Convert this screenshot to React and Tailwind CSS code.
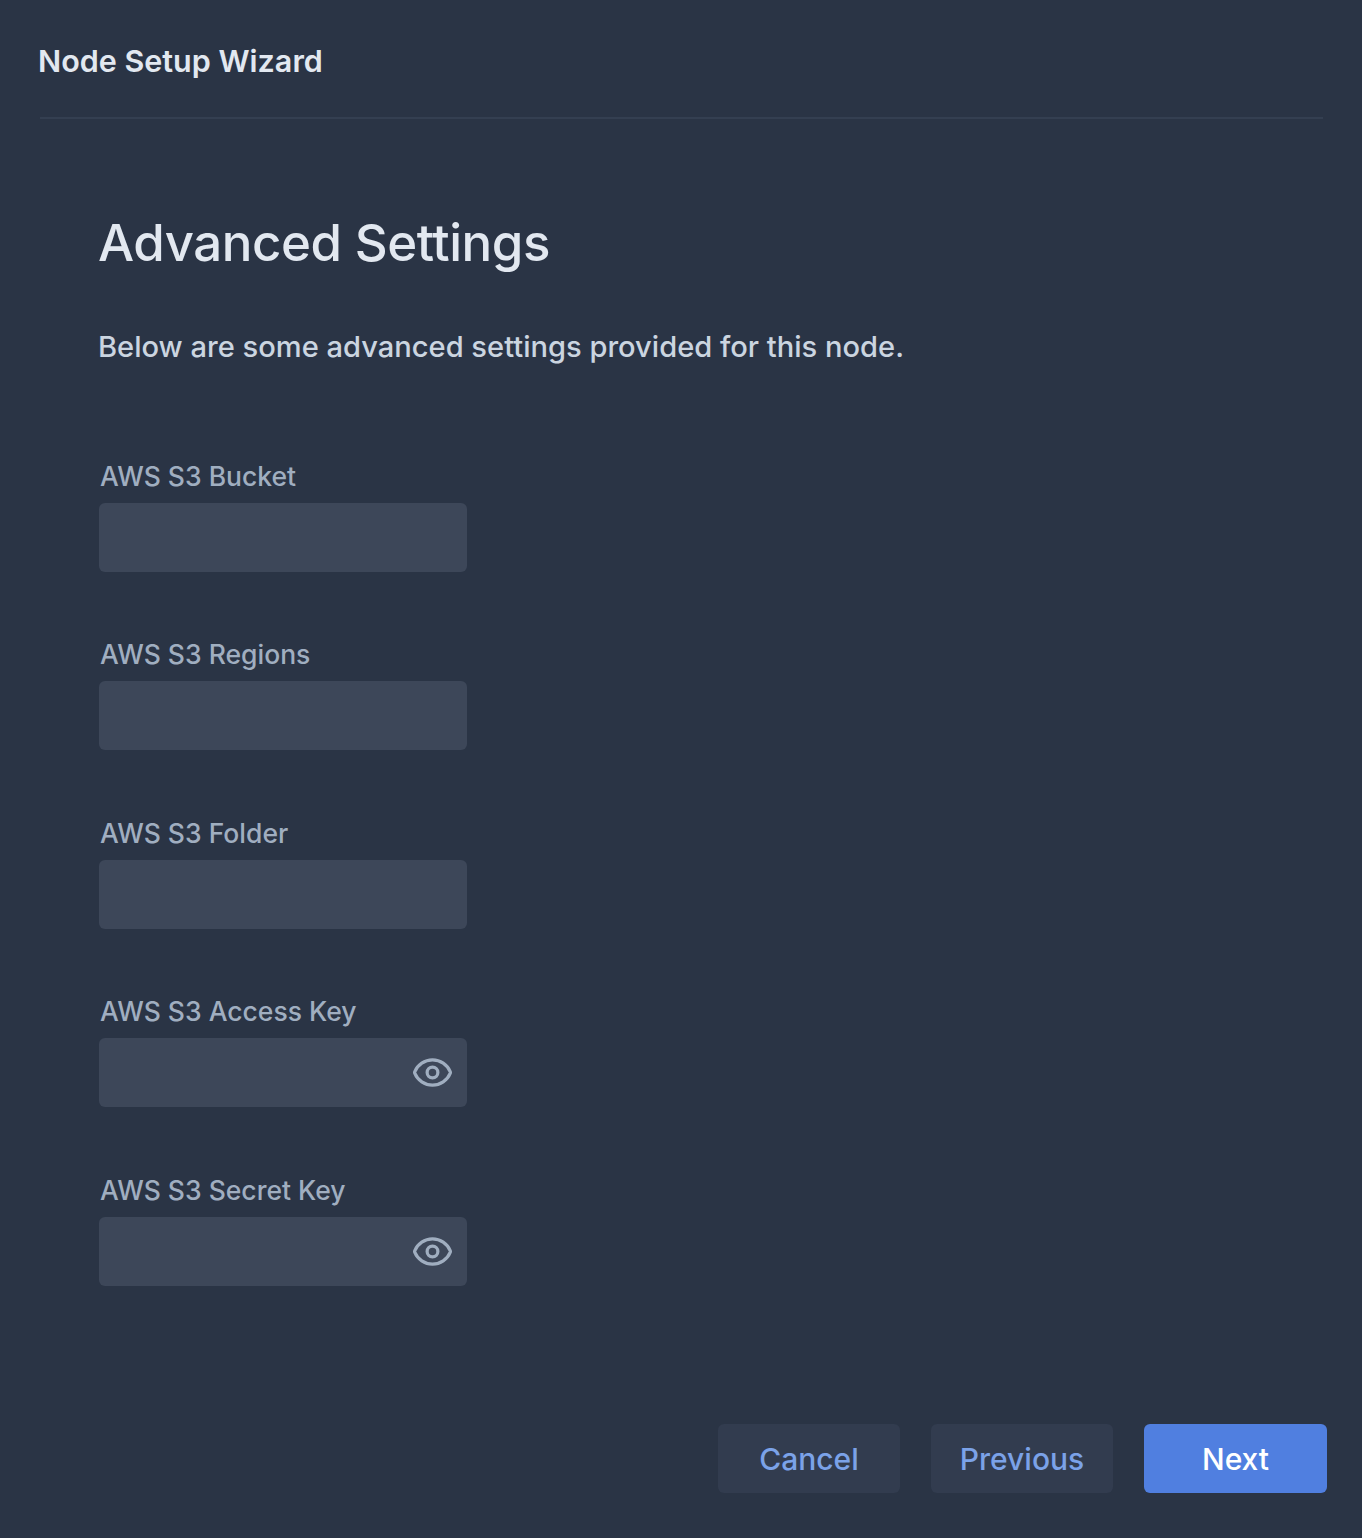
import { Eye } from "lucide-react";

const FIELDS = [
  { label: "AWS S3 Bucket" },
  { label: "AWS S3 Regions" },
  { label: "AWS S3 Folder" },
  { label: "AWS S3 Access Key", secret: true },
  { label: "AWS S3 Secret Key", secret: true },
];

function Field({ label, secret }) {
  return (
    <div className="h-[178.4px]">
      <div className="pl-[1px] h-[40px] text-[26.5px] leading-[40px] font-[450] text-[#a0aec0]">{label}</div>
      <div className="flex items-center justify-end w-[368px] h-[69px] mt-[7px] pr-[13px] rounded-md bg-[#3d4759]">
        {secret && <Eye className="w-[43px] h-[43px] text-[#a0aec0]" strokeWidth={1.8} />}
      </div>
    </div>
  );
}

export default function App() {
  return (
    <div className="w-[1362px] h-[1538px] bg-[#2a3445] font-['Inter',sans-serif] flex flex-col overflow-hidden">
      {/* Header */}
      <div className="pl-[38px] pt-[42px] h-[117px] text-[30.5px] leading-[38px] font-semibold text-[#e2e8f0]">
        Node Setup Wizard
      </div>
      <div className="ml-[40px] mr-[39px] h-[2px] bg-[#343f51]" />

      {/* Body */}
      <div className="pl-[99px] flex-1">
        <h1 className="mt-[91px] -ml-[1px] h-[66px] text-[51px] leading-[66px] font-[450] tracking-[-0.45px] text-[#e2e8f0]">Advanced Settings</h1>
        <p className="mt-[49px] -ml-[1px] text-[29.1px] leading-[44px] font-[450] text-[#cbd5e0]">
          Below are some advanced settings provided for this node.
        </p>
        <div className="mt-[87px]">
          {FIELDS.map(f => <Field key={f.label} {...f} />)}
        </div>
      </div>

      {/* Footer */}
      <div className="flex justify-end gap-[31px] pr-[35px] pb-[45px] text-[30px]">
        <button className="w-[182px] h-[69px] pt-[1px] rounded-md bg-[#323c4f] text-[#7ba2e8] font-[450]">Cancel</button>
        <button className="w-[182px] h-[69px] pt-[1px] rounded-md bg-[#323c4f] text-[#7ba2e8] font-[450]">Previous</button>
        <button className="w-[183px] h-[69px] pt-[1px] rounded-md bg-[#507fe0] text-white font-medium">Next</button>
      </div>
    </div>
  );
}
